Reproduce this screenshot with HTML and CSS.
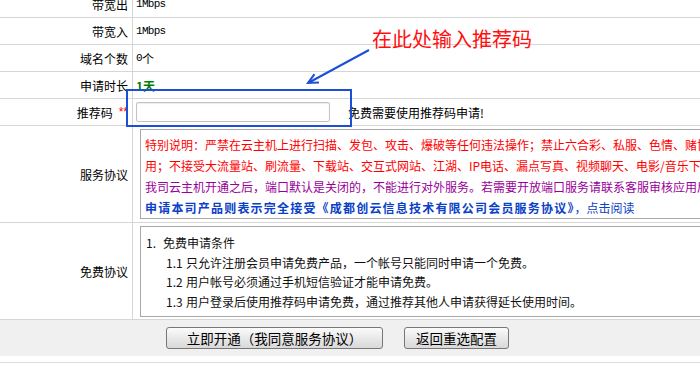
FILE: index.html
```html
<!DOCTYPE html>
<html lang="zh-CN">
<head>
<meta charset="utf-8">
<title>免费申请</title>
<link rel="stylesheet" href="styles.css">
</head>
<body>
<div class="page">
  <div class="table">
    <div class="row"><div class="label">带宽出</div><div class="value"><span class="mono">1Mbps</span></div></div>
    <div class="row"><div class="label">带宽入</div><div class="value"><span class="mono">1Mbps</span></div></div>
    <div class="row"><div class="label">域名个数</div><div class="value"><span class="mono">0</span>个</div></div>
    <div class="row"><div class="label">申请时长</div><div class="value"><b class="green">1天</b></div></div>
    <div class="row"><div class="label">推荐码 <span class="req">**</span></div><div class="value"><input class="code-input" type="text"><span class="hint">免费需要使用推荐码申请!</span></div></div>
    <div class="row row-tall"><div class="label">服务协议</div><div class="value">
      <div class="agree-box">
        <div class="red">特别说明：严禁在云主机上进行扫描、发包、攻击、爆破等任何违法操作；禁止六合彩、私服、色情、赌博等违法内容使</div>
        <div class="red">用；不接受大流量站、刷流量、下载站、交互式网站、江湖、IP电话、漏点写真、视频聊天、电影/音乐下载站等。</div>
        <div class="purple">我司云主机开通之后，端口默认是关闭的，不能进行对外服务。若需要开放端口服务请联系客服审核应用后开通。</div>
        <div class="blue"><b>申请本司产品则表示完全接受《成都创云信息技术有限公司会员服务协议》</b>，点击阅读</div>
      </div>
    </div></div>
    <div class="row row-tall"><div class="label">免费协议</div><div class="value">
      <div class="free-box">
        <div class="free-line"><span class="num1">1.</span>免费申请条件</div>
        <div class="free-line sub"><span class="num2">1.1</span>只允许注册会员申请免费产品，一个帐号只能同时申请一个免费。</div>
        <div class="free-line sub"><span class="num2">1.2</span>用户帐号必须通过手机短信验证才能申请免费。</div>
        <div class="free-line sub"><span class="num2">1.3</span>用户登录后使用推荐码申请免费，通过推荐其他人申请获得延长使用时间。</div>
      </div>
    </div></div>
  </div>
  <div class="footer">
    <button class="btn btn-main" type="button">立即开通（我同意服务协议）</button>
    <button class="btn btn-back" type="button">返回重选配置</button>
  </div>
  <div class="bottom-line"></div>

  <div class="annot-box"></div>
  <svg class="annot-arrow" width="700" height="369" viewBox="0 0 700 369">
    <line x1="369" y1="50" x2="309" y2="82.5" stroke="#1a4fd6" stroke-width="2"/>
    <polyline points="319,82.4 308,83 314.5,74.2" fill="none" stroke="#1a4fd6" stroke-width="2"/>
  </svg>
  <div class="annot-text">在此处输入推荐码</div>
</div>
</body>
</html>
```
FILE: styles.css
```css
html, body {
  margin: 0;
  padding: 0;
  overflow: hidden;
  background: #fff;
}
body {
  font-family: "Noto Sans CJK SC", "Noto Sans", sans-serif;
  font-size: 12px;
  color: #000;
}
.page {
  position: relative;
  width: 700px;
  height: 369px;
  overflow: hidden;
}
.table {
  margin-top: -9px;
}
.row {
  display: grid;
  grid-template-columns: 133px 1fr;
  height: 27px;
  box-sizing: border-box;
  border-bottom: 1px solid #d6d6d6;
}
.row-tall {
  height: auto;
}
.label {
  box-sizing: border-box;
  border-right: 1px solid #d6d6d6;
  text-align: right;
  padding-right: 4px;
  display: flex;
  align-items: center;
  justify-content: flex-end;
  white-space: nowrap;
}
.req {
  color: #ff0000;
  margin-left: 6px;
  font-family: "Liberation Sans", sans-serif;
  font-size: 12px;
}
.value {
  display: flex;
  align-items: center;
  padding-left: 3px;
  white-space: nowrap;
}
.mono {
  font-family: "Liberation Mono", monospace;
  font-size: 11px;
  letter-spacing: -0.7px;
}
.green {
  color: #008000;
  font-weight: bold;
}
.code-input {
  box-sizing: border-box;
  width: 194px;
  height: 20px;
  margin: 0;
  border: 1px solid #c4c4c4;
  border-radius: 2px;
  background: #fff;
  box-shadow: inset 0 1px 1px #ececec;
}
.hint {
  margin-left: 18px;
}
.row-tall .value {
  padding: 3px 0 3px 7px;
  align-items: flex-start;
}
.agree-box {
  box-sizing: border-box;
  width: 820px;
  height: 90px;
  border: 1px solid #a8a8a8;
  border-right: none;
  padding: 4px 4px 0 4px;
  line-height: 21px;
  overflow: hidden;
}
.red { color: #ff0000; }
.purple { color: #990099; }
.blue { color: #0b3fc6; }
.blue b {
  font-weight: bold;
  letter-spacing: 1.2px;
}
.free-box {
  box-sizing: border-box;
  width: 820px;
  height: 91px;
  border: 1px solid #a8a8a8;
  border-right: none;
  padding: 6px 4px 0 5px;
  line-height: 19.5px;
  color: #111;
  margin-bottom: -1px;
}
.free-line.sub {
  padding-left: 20px;
}
.num1 {
  display: inline-block;
  width: 17px;
}
.num2 {
  display: inline-block;
  width: 20px;
}
.footer {
  display: flex;
  align-items: flex-start;
  gap: 21px;
  height: 36px;
  box-sizing: border-box;
  padding: 7px 0 0 166px;
  background: #f0f0f0;
}
.btn {
  box-sizing: border-box;
  height: 22px;
  margin: 0;
  padding: 0;
  border: 1px solid #777;
  border-radius: 3px;
  background: linear-gradient(#fbfbfb, #e9e9e9 50%, #d9d9d9);
  font-family: "Noto Sans CJK SC", sans-serif;
  font-size: 13.5px;
  line-height: 20px;
  color: #000;
}
.btn-main { width: 217px; }
.btn-back { width: 105px; }
.bottom-line {
  margin-top: 6px;
  height: 1px;
  background: #dcdcdc;
}
.annot-box {
  position: absolute;
  left: 126px;
  top: 89px;
  width: 226px;
  height: 38px;
  box-sizing: border-box;
  border: 2px solid #1a4fd6;
}
.annot-arrow {
  position: absolute;
  left: 0;
  top: 0;
  pointer-events: none;
}
.annot-text {
  position: absolute;
  left: 372px;
  top: 25px;
  font-size: 20px;
  line-height: 28px;
  color: #ff1010;
  white-space: nowrap;
}
```
